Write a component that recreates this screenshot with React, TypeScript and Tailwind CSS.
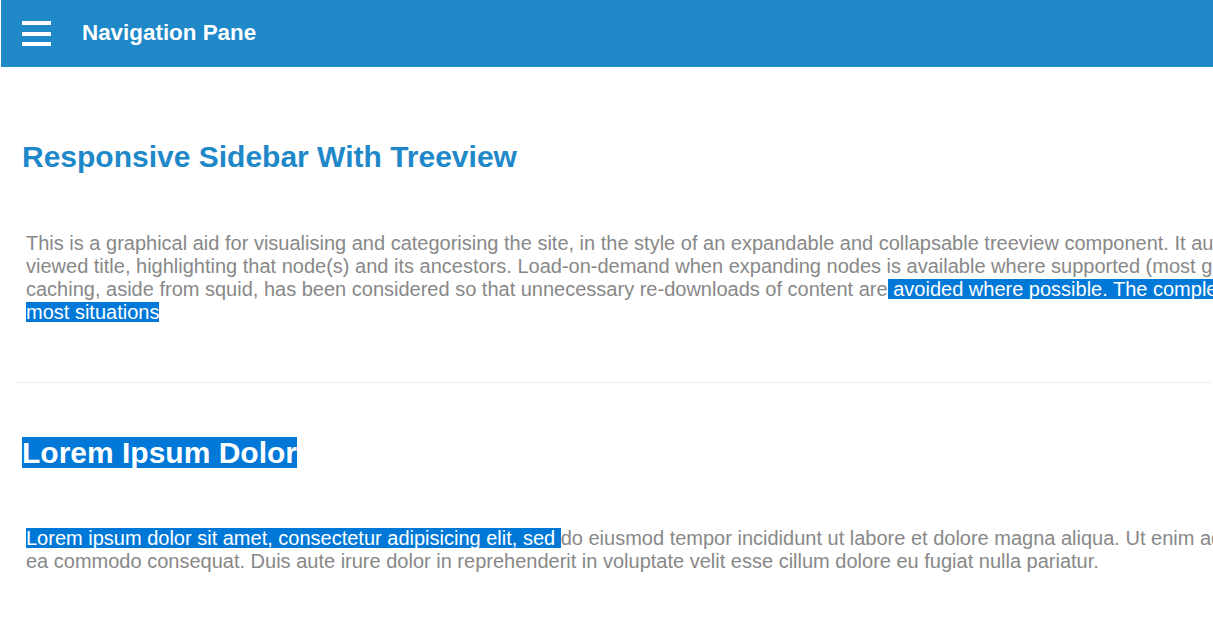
import React from 'react'

// mimics the browser's text selection
const sel = 'inline-block h-[20px] leading-[20px] whitespace-pre bg-[#0078d7] text-white'

function Hamburger() {
  return (
    <div className="flex flex-col gap-[6.5px] w-[29px]">
      <span className="block h-[4px] bg-white" />
      <span className="block h-[4px] bg-white" />
      <span className="block h-[4px] bg-white" />
    </div>
  )
}

export default function App() {
  return (
    <div className="min-h-screen overflow-hidden bg-white font-['Liberation_Sans',Arial,sans-serif]">
      {/* Top bar */}
      <header className="ml-[1px] h-[67px] bg-[#1e88c9] flex items-center pl-[21px]">
        <Hamburger />
        <h2 className="ml-[31px] text-white font-bold text-[22.4px] leading-none">Navigation Pane</h2>
      </header>

      <main className="w-max pl-[22px] pr-[40px]">
        <h1 className="mt-[73px] text-[30px] leading-[34px] font-bold text-[#1e88c9]">
          Responsive Sidebar With Treeview
        </h1>

        <p className="mt-[58px] pl-[4px] text-[20px] leading-[23px] text-[#888888] whitespace-nowrap">
          This is a graphical aid for visualising and categorising the site, in the style of an expandable and collapsable treeview component. It auto-expands to display the node(s) that correspond to the presently
          <br />
          viewed title, highlighting that node(s) and its ancestors. Load-on-demand when expanding nodes is available where supported (most graphical browsers), falling back to a pre-loaded and expanded tree otherwise. Some
          <br />
          caching, aside from squid, has been considered so that unnecessary re-downloads of content are
          <span className={sel}>{' avoided where possible. The complete tree is usually trimmed down to make display more manageable in'}</span>
          <br />
          <span className={sel}>most situations</span>
        </p>

        <hr className="mt-[58px] -ml-[4px] border-0 border-t border-dotted border-[#dddddd]" />

        <h1 className="mt-[54px] flex text-[30px] font-bold">
          <span className="h-[31px] leading-[31px] bg-[#0078d7] text-white">Lorem Ipsum Dolor</span>
        </h1>

        <p className="mt-[59px] pl-[4px] text-[20px] leading-[23px] text-[#888888] whitespace-nowrap">
          <span className={sel}>{'Lorem ipsum dolor sit amet, consectetur adipisicing elit, sed '}</span>
          do eiusmod tempor incididunt ut labore et dolore magna aliqua. Ut enim ad minim veniam, quis nostrud exercitation ullamco laboris nisi ut aliquip ex
          <br />
          ea commodo consequat. Duis aute irure dolor in reprehenderit in voluptate velit esse cillum dolore eu fugiat nulla pariatur.
        </p>
      </main>
    </div>
  )
}
